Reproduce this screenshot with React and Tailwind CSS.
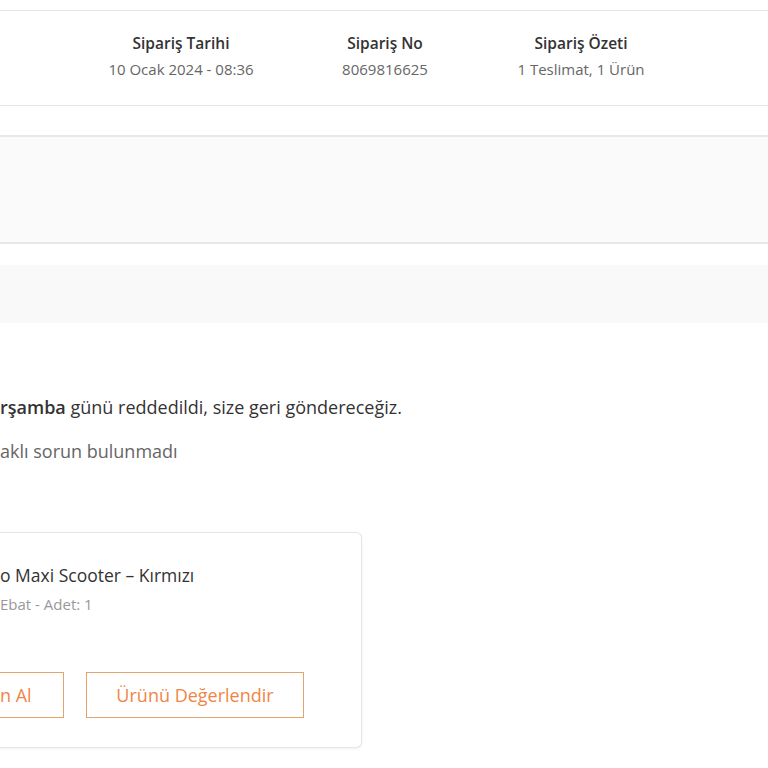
export default function App() {
  return (
    <div className="min-h-[768px] w-[768px] overflow-hidden bg-white text-[#333]" style={{ fontFamily: "'Open Sans', 'Noto Sans', sans-serif" }}>
      {/* Order header */}
      <div className="h-[10px]" />
      <div className="flex h-[96px] items-center border-y border-[#e6e6e6] bg-white pb-[4px]">
        <div className="ml-[91px] w-[180px] text-center">
          <div className="text-[15.5px] font-semibold leading-5 text-[#333]">Sipariş Tarihi</div>
          <div className="mt-[6px] text-[15px] leading-5 text-[#666]">10 Ocak 2024 - 08:36</div>
        </div>
        <div className="ml-[24px] w-[180px] text-center">
          <div className="text-[15.5px] font-semibold leading-5 text-[#333]">Sipariş No</div>
          <div className="mt-[6px] text-[15px] leading-5 text-[#666]">8069816625</div>
        </div>
        <div className="ml-[16px] w-[180px] text-center">
          <div className="text-[15.5px] font-semibold leading-5 text-[#333]">Sipariş Özeti</div>
          <div className="mt-[6px] text-[15px] leading-5 text-[#666]">1 Teslimat, 1 Ürün</div>
        </div>
      </div>

      {/* Gray panels */}
      <div className="mt-[29px] h-[109px] border-y-2 border-[#e8e8e8] bg-[#fafafa]" />
      <div className="mt-[21px] h-[58px] bg-[#f9f9f9]" />

      {/* Status text */}
      <div className="mt-[72px] text-[18px] leading-6 text-[#333]">
        <span className="font-semibold">rşamba</span> günü reddedildi, size geri göndereceğiz.
      </div>
      <div className="mt-[20px] text-[18px] leading-6 text-[#666]">aklı sorun bulunmadı</div>

      {/* Product card */}
      <div className="mt-[69px] flex h-[216px] w-[362px] flex-col rounded-r-md border border-l-0 border-[#e6e6e6] bg-white shadow-[0_1px_3px_rgba(0,0,0,0.06)]">
        <div className="mt-[30px] text-[17.5px] leading-6 text-[#333]">o Maxi Scooter – Kırmızı</div>
        <div className="mt-[7px] text-[15px] leading-5 text-[#999]">Ebat - Adet: 1</div>
        <div className="mt-[58px] flex gap-[22px]">
          <button className="flex h-[46px] w-[64px] items-center whitespace-nowrap border border-l-0 border-[#e3a56c] text-[18px] text-[#ef8646]">
            n Al
          </button>
          <button className="flex h-[46px] w-[218px] items-center justify-center whitespace-nowrap border border-[#e3a56c] text-[18px] text-[#ef8646]">
            Ürünü Değerlendir
          </button>
        </div>
      </div>
    </div>
  );
}
